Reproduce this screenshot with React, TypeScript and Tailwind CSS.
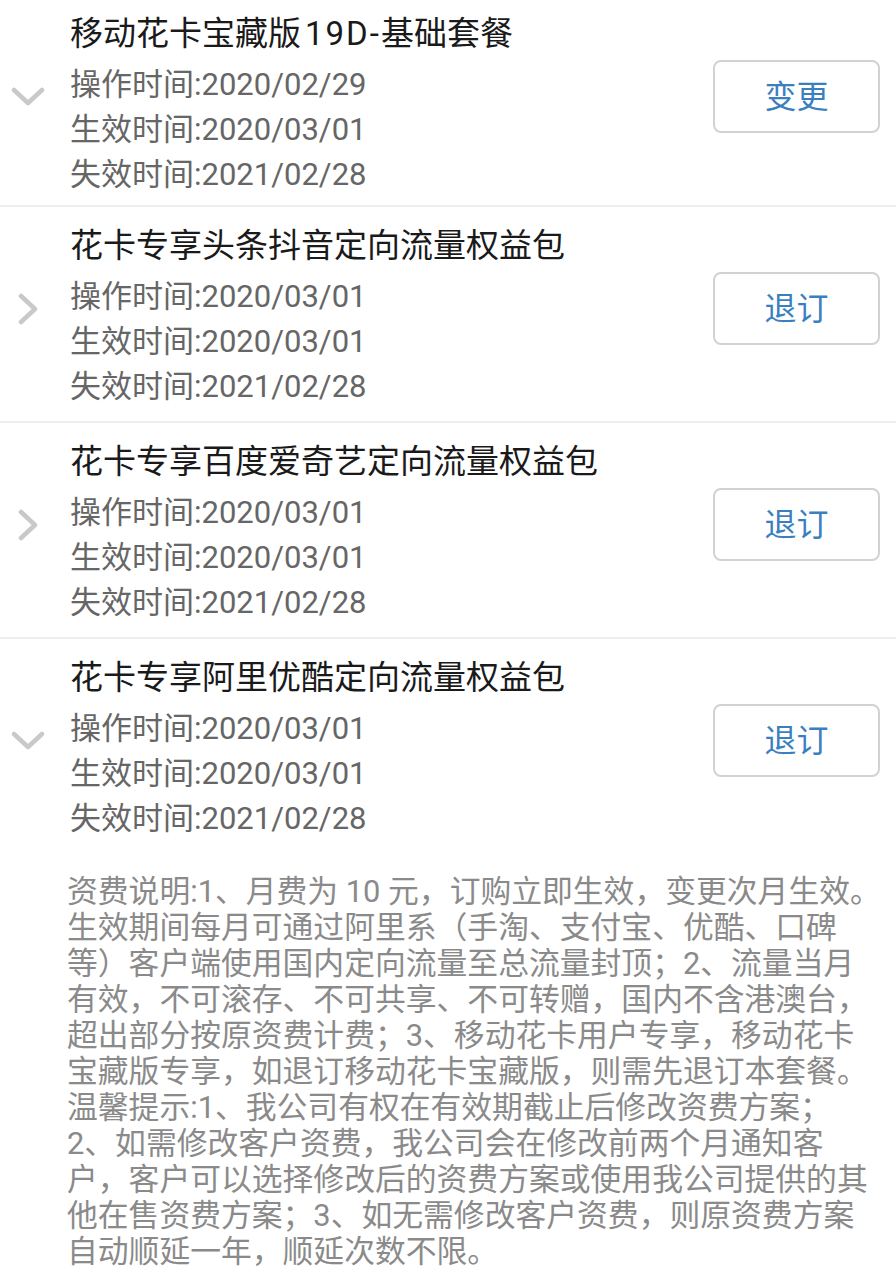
import React from "react";

const FONT = '"Roboto", "Noto Sans CJK SC", sans-serif';

type Item = {
  title: React.ReactNode;
  op: string;
  eff: string;
  exp: string;
  action: string;
  open: boolean;
  last?: boolean;
  first?: boolean;
};

function ChevronDown() {
  return (
    <svg width="34" height="20" viewBox="0 0 34 20" fill="none">
      <polyline points="3,3 17,16 31,3" stroke="#c9c9c9" strokeWidth="4.5" strokeLinecap="round" strokeLinejoin="round" />
    </svg>
  );
}

function ChevronRight() {
  return (
    <svg width="20" height="32" viewBox="0 0 20 32" fill="none">
      <polyline points="3,3 17,16 3,29" stroke="#c9c9c9" strokeWidth="4.5" strokeLinecap="round" strokeLinejoin="round" />
    </svg>
  );
}

function Row({ item }: { item: Item }) {
  return (
    <div
      className={
        "flex items-start pt-[17px] " +
        (item.first ? "pb-[8px] " : "pb-[12px] ") +
        (item.last ? "" : "border-b-2 border-[#eeeeee]")
      }
    >
      <div className="w-[56px] shrink-0 h-[32px] mt-[69px] flex items-center justify-center">
        {item.open ? <ChevronDown /> : <ChevronRight />}
      </div>
      <div className="ml-[14px] flex-1 flex flex-col">
        <div className="h-[44px] leading-[44px] text-[33px] text-[#1a1a1a] whitespace-nowrap">{item.title}</div>
        <div className="mt-[6px] flex flex-col text-[31px] text-[#666666] whitespace-nowrap">
          <div className="h-[45px] leading-[45px]">操作时间:{item.op}</div>
          <div className="h-[45px] leading-[45px]">生效时间:{item.eff}</div>
          <div className="h-[45px] leading-[45px]">失效时间:{item.exp}</div>
        </div>
      </div>
      <div className="mt-[48px] mr-[16px] shrink-0 w-[167px] h-[73px] border-2 border-[#d2d2d2] rounded-[8px] flex items-center justify-center text-[32px] text-[#3b7fc0]">
        {item.action}
      </div>
    </div>
  );
}

const items: Item[] = [
  {
    title: (
      <>
        移动花卡宝藏版<span className="ml-[4px] tracking-[2px]">19D-</span>基础套餐
      </>
    ),
    op: "2020/02/29",
    eff: "2020/03/01",
    exp: "2021/02/28",
    action: "变更",
    open: true,
    first: true,
  },
  {
    title: "花卡专享头条抖音定向流量权益包",
    op: "2020/03/01",
    eff: "2020/03/01",
    exp: "2021/02/28",
    action: "退订",
    open: false,
  },
  {
    title: "花卡专享百度爱奇艺定向流量权益包",
    op: "2020/03/01",
    eff: "2020/03/01",
    exp: "2021/02/28",
    action: "退订",
    open: false,
  },
  {
    title: "花卡专享阿里优酷定向流量权益包",
    op: "2020/03/01",
    eff: "2020/03/01",
    exp: "2021/02/28",
    action: "退订",
    open: true,
    last: true,
  },
];

const lines = [
  "资费说明:1、月费为 10 元，订购立即生效，变更次月生效。",
  "生效期间每月可通过阿里系（手淘、支付宝、优酷、口碑",
  "等）客户端使用国内定向流量至总流量封顶；2、流量当月",
  "有效，不可滚存、不可共享、不可转赠，国内不含港澳台，",
  "超出部分按原资费计费；3、移动花卡用户专享，移动花卡",
  "宝藏版专享，如退订移动花卡宝藏版，则需先退订本套餐。",
  "温馨提示:1、我公司有权在有效期截止后修改资费方案；",
  "2、如需修改客户资费，我公司会在修改前两个月通知客",
  "户，客户可以选择修改后的资费方案或使用我公司提供的其",
  "他在售资费方案；3、如无需修改客户资费，则原资费方案",
  "自动顺延一年，顺延次数不限。",
];

export default function App() {
  return (
    <div className="w-[896px] h-[1280px] overflow-hidden bg-white" style={{ fontFamily: FONT }}>
      <div className="mt-[-5px] flex flex-col">
        {items.map((it, i) => (
          <Row key={i} item={it} />
        ))}
        <div className="mt-[21px] pl-[67px] flex flex-col text-[30.8px] text-[#8a8a8a]">
          {lines.map((l, i) => (
            <div key={i} className="h-[36px] leading-[36px] whitespace-nowrap">
              {l}
            </div>
          ))}
        </div>
      </div>
    </div>
  );
}
